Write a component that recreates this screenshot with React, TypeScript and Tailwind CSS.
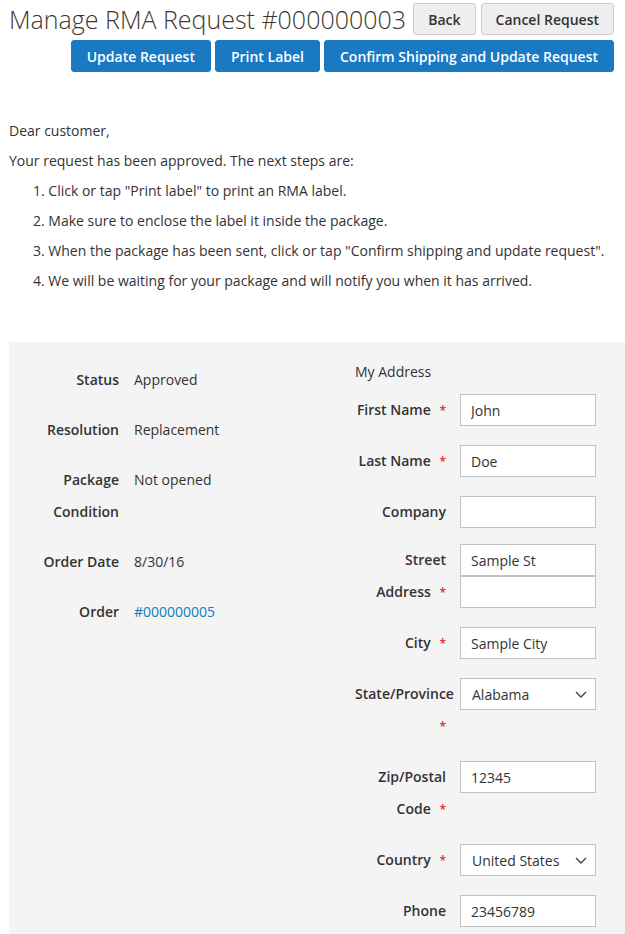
import React from 'react';

interface InfoRow {
    label: string;
    value: string;
    link?: boolean;
}

interface FieldRow {
    label: string;
    required?: boolean;
    values: string[];
    select?: boolean;
    gapAfter?: string;
}

const infoRows: InfoRow[] = [
    { label: 'Status', value: 'Approved' },
    { label: 'Resolution', value: 'Replacement' },
    { label: 'Package Condition', value: 'Not opened' },
    { label: 'Order Date', value: '8/30/16' },
    { label: 'Order', value: '#000000005', link: true },
];

const fields: FieldRow[] = [
    { label: 'First Name', required: true, values: ['John'] },
    { label: 'Last Name', required: true, values: ['Doe'] },
    { label: 'Company', values: [''], gapAfter: 'mb-[16px]' },
    { label: 'Street Address', required: true, values: ['Sample St', ''] },
    { label: 'City', required: true, values: ['Sample City'] },
    { label: 'State/Province', required: true, values: ['Alabama'], select: true },
    { label: 'Zip/Postal Code', required: true, values: ['12345'] },
    { label: 'Country', required: true, values: ['United States'], select: true },
    { label: 'Phone', values: ['23456789'] },
];

const steps = [
    'Click or tap "Print label" to print an RMA label.',
    'Make sure to enclose the label it inside the package.',
    'When the package has been sent, click or tap "Confirm shipping and update request".',
    'We will be waiting for your package and will notify you when it has arrived.',
];

const GrayButton: React.FC<{ children: React.ReactNode }> = ({ children }) => (
    <button className="h-[32px] whitespace-nowrap px-[14px] rounded-[3px] border border-[#cccccc] bg-[#eeeeee] text-[14px] font-semibold text-[#333333]">
        {children}
    </button>
);

const BlueButton: React.FC<{ children: React.ReactNode }> = ({ children }) => (
    <button className="h-[32px] whitespace-nowrap px-[15px] rounded-[3px] border border-[#1979c3] bg-[#1979c3] text-[14px] font-semibold text-white">
        {children}
    </button>
);

const Chevron = () => (
    <svg width="12" height="7" viewBox="0 0 12 7" fill="none">
        <polyline points="1,1 6,6 11,1" stroke="#444444" strokeWidth="1.4" />
    </svg>
);

const Field: React.FC<{ field: FieldRow }> = ({ field }) => (
    <div className={`flex items-start ${field.gapAfter ?? 'mb-[19px]'}`}>
        <label className="w-[91px] shrink-0 text-right leading-[32px] font-semibold text-[#333333]">
            {field.label}
            {field.required && (
                <>
                    {' '}
                    <span className="ml-[5px] text-[12px] leading-none text-[#e02b27]">*</span>
                </>
            )}
        </label>
        <div className="ml-[14px] flex w-[136px] flex-col">
            {field.values.map((v, i) =>
                field.select ? (
                    <div
                        key={i}
                        className="flex h-[32px] items-center justify-between border border-[#c2c2c2] bg-white pl-[11px] pr-[8px] text-[#333333]"
                    >
                        <span>{v}</span>
                        <Chevron />
                    </div>
                ) : (
                    <input
                        key={i}
                        readOnly
                        value={v}
                        className="h-[32px] w-full border border-[#c2c2c2] bg-white px-[10px] text-[14px] text-[#333333] outline-none"
                    />
                )
            )}
        </div>
    </div>
);

export default function App() {
    return (
        <div className="min-h-screen bg-white pl-[9px] text-[14px] text-[#333333] [font-family:'Open_Sans',sans-serif]">
            {/* page title and actions */}
            <div className="pr-[11px] pt-[3px]">
                <div className="flex items-center">
                    <h1 className="shrink-0 whitespace-nowrap text-[25px] font-light leading-[32px] text-[#41362f]">
                        Manage RMA Request #000000003
                    </h1>
                    <div className="ml-auto flex gap-[5px]">
                        <GrayButton>Back</GrayButton>
                        <GrayButton>Cancel Request</GrayButton>
                    </div>
                </div>
                <div className="mt-[5px] flex justify-end gap-[4px]">
                    <BlueButton>Update Request</BlueButton>
                    <BlueButton>Print Label</BlueButton>
                    <BlueButton>Confirm Shipping and Update Request</BlueButton>
                </div>
            </div>

            {/* instructions */}
            <div className="mt-[44px] leading-[30px]">
                <p>Dear customer,</p>
                <p>Your request has been approved. The next steps are:</p>
                <ol className="pl-[24px]">
                    {steps.map((s, i) => (
                        <li key={i}>
                            {i + 1}. {s}
                        </li>
                    ))}
                </ol>
            </div>

            {/* request details and address form */}
            <div className="mt-[46px] flex bg-[#f4f4f4] pb-[20px] pt-[20px]">
                <div className="w-[346px] shrink-0 pt-[2px]">
                    {infoRows.map((row) => (
                        <div key={row.label} className="mb-[18px] flex leading-[32px]">
                            <div className="w-[110px] shrink-0 text-right font-semibold">{row.label}</div>
                            <div className={`ml-[15px] ${row.link ? 'text-[#1979c3]' : ''}`}>{row.value}</div>
                        </div>
                    ))}
                </div>
                <div className="flex-1">
                    <div className="mb-[12px] leading-[20px]">My Address</div>
                    {fields.map((f) => (
                        <Field key={f.label} field={f} />
                    ))}
                </div>
            </div>
        </div>
    );
}
